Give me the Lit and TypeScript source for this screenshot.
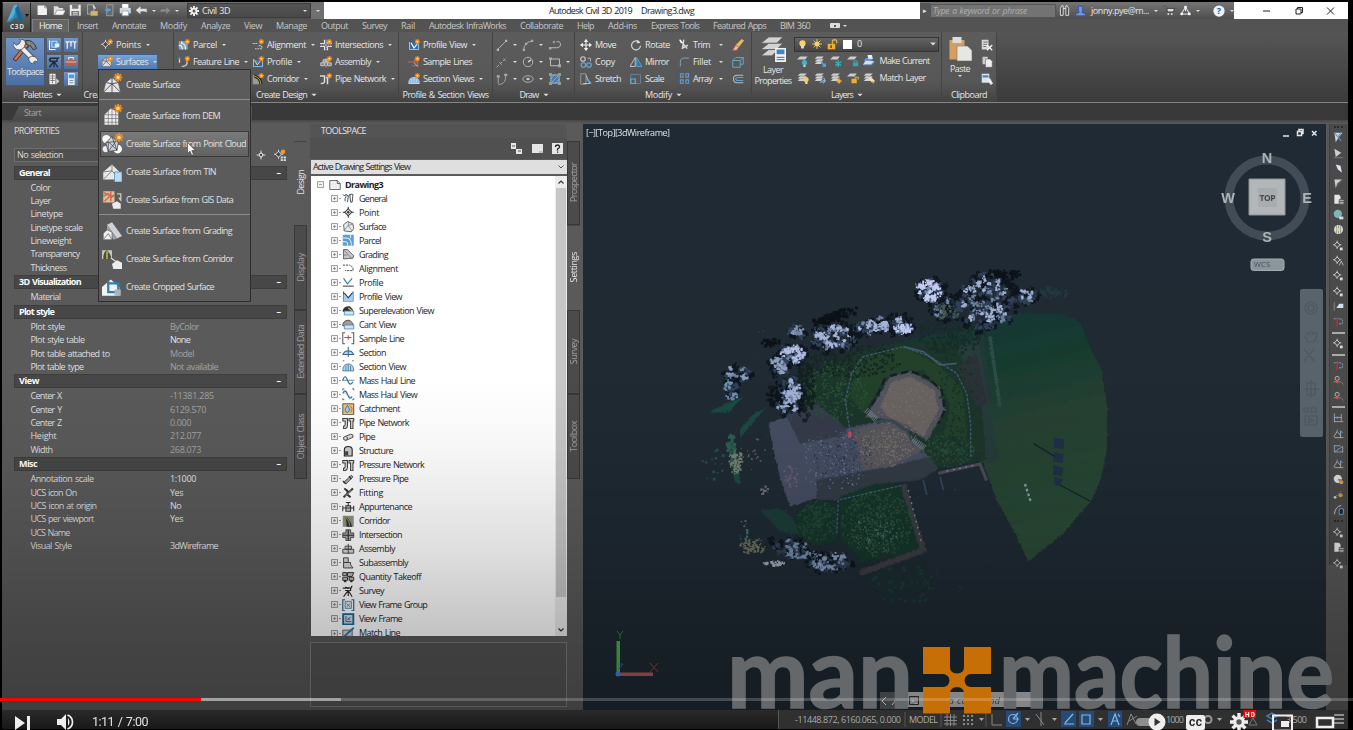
import { LitElement, html, css, svg } from "lit";
import { customElement, property } from "lit/decorators.js";
import { classMap } from "lit/directives/class-map.js";

/* ---------- icons (16 x 16 grid) ---------- */
const spark = svg`<path d="M12.500 0v7M9 3.500h7M10 1l5 5M15 1l-5 5" stroke="#f08a1c" stroke-width="1.500"/><circle cx="12.500" cy="3.500" r="1.300" fill="#ffe2a0"/>`;
const sheets = svg`<path d="M4 2h9l-3 3H1zM4 5.500h9l-3 3H1zM4 9h8l-3 3H1z" fill="#d2d2d2"/>`;
const node = svg`<path d="M8 1v14M1 8h14" stroke="#ddd" stroke-width="1.600"/><circle cx="8" cy="8" r="3" fill="#444" stroke="#eee" stroke-width="1.600"/>`;
const smallNode = svg`<path d="M6 1v12M0 7h12" stroke="#ddd" stroke-width="1.200"/><path d="M6 3l4 4-4 4-4-4z" fill="#4a4a4a" stroke="#eee" stroke-width="1.200"/>`;
const pipe = svg`<path d="M1 2h6v9q0 4-5 4v-3q2 0 2-2V5H1zM9 2h6v3h-1v10h-3V5H9z" fill="#ddd" stroke="#3c3c3c" stroke-width="1.300"/>`;

const ICONS: Record<string, any> = {
  new: svg`<path d="M2 2h9l3 3v9H2z" fill="#f1f1f1"/><path d="M11 2v3h3" fill="none" stroke="#888"/>`,
  open: svg`<path d="M1 3h5l2 2h5v3H5l-3 6H1z" fill="#ddd"/><path d="M5 8h11l-3 6H2z" fill="#f4f4f4" stroke="#777" stroke-width=".6"/>`,
  save: svg`<path d="M1 1h14v14H1z" fill="#e9e9e9"/><path d="M4 1h8v5H4zM3 9h10v6H3z" fill="#777"/><path d="M5 11h6M5 13h6" stroke="#eee"/>`,
  saveas: svg`<path d="M2 1h8v12H2z" fill="#666" stroke="#bbb"/><path d="M6 9h9v6H6z" fill="#d8b25c"/><path d="M9 2l3 4" stroke="#d9d9d9" fill="none" stroke-width="2"/>`,
  web: svg`<path d="M6 1h8v14H6z" fill="#686868" stroke="#aaa"/><path d="M8 4l-5 4 5 3V9h3V6H8z" fill="#4fa3d8"/>`,
  print: svg`<path d="M4 0h8v5H4z" fill="#fff"/><path d="M1 5h14v7H1z" fill="#d8d8d8"/><path d="M4 9h8v6H4z" fill="#fff" stroke="#7da6c8"/>`,
  undo: svg`<path d="M1 8l6-5v3h8v5q-2-2-8-1.500V13z" fill="#e0e0e0"/>`,
  redo: svg`<path d="M15 8L9 3v3H1v5q2-2 8-1.500V13z" fill="#8a8a8a"/>`,
  gear: svg`<path d="M8 0v16M0 8h16M2.300 2.300l11.400 11.400M13.700 2.300L2.300 13.700" stroke="#eee" stroke-width="3"/><circle cx="8" cy="8" r="5.200" fill="#eee"/><circle cx="8" cy="8" r="2.400" fill="#555"/>`,
  tools: svg`<path d="M8 1q5-1 7 5l-2 1-2-3-2 2z" fill="#7f858c" stroke="#333" stroke-width=".6"/><path d="M10 4L2 14l-2-1 8-10z" fill="#c9744a" stroke="#4a2b1c" stroke-width=".6"/><path d="M3.500 3.500l10 10" stroke="#444" stroke-width="3.600"/><path d="M3.500 3.500l10 10" stroke="#ececec" stroke-width="2.600"/><path d="M0 2l2 2 2-1 1-2-1-1q4 0 4 3-1 4-4 4-4 0-4-5zM12 11q4 0 4 4l-2-1-1 1 1 1q-4 0-4-4z" fill="#ececec" stroke="#444" stroke-width=".5"/>`,
  palette: svg`<path d="M2 2v12h8" stroke="#fff" fill="none" stroke-width="1.500"/><path d="M5 3h7v8H5z" fill="#4b9bd3" stroke="#e8f4ff"/><path d="M9 6h6v5H9z" fill="#e9eef4"/>`,
  pins: svg`<path d="M1 3l2 2 2-2M3 5v8M6 3l2 2 2-2M8 5v5M11 3l2 2 2-2M13 5v8" stroke="#f0f0f0" fill="none" stroke-width="1.600"/>`,
  survey: svg`<path d="M3 3h9v4H3zM1 5h2M12 4l3-2M8 7l-6 8M8 7v8M8 7l5 8" stroke="#1e2a38" fill="none" stroke-width="1.800"/>`,
  toolbox: svg`<path d="M5 5V2h6v3" fill="none" stroke="#eee" stroke-width="1.500"/><path d="M1 5h14v8H1z" fill="#b6604a"/><path d="M1 8h14" stroke="#f0dfd6"/>`,
  props: svg`<path d="M2 1h8v14H2z" fill="#eee"/><path d="M3 4h6M3 7h6M3 10h6M6 2v12" stroke="#666"/><path d="M11 7l4 4-4 4" fill="#ddd"/>`,
  prospect: svg`<path d="M4 0h9v16H4z" fill="#dceaf7"/><path d="M5 2h7v5H5z" fill="#4f9bd6"/><path d="M6 10h5M6 13h5" stroke="#777"/>`,
  points: svg`${smallNode}${spark}`,
  surface: svg`<path d="M2 6l5-4 6 4 1 8H1z" fill="#ddd" stroke="#555" stroke-width=".6"/><path d="M1 14l6-7 7 7M2 6l5 1 6-1M7 2v5" stroke="#555" fill="none"/>${spark}`,
  parcel: svg`<path d="M1 3h12v11H1z" fill="#88a2b8"/><path d="M1 9q4-2 5 5M5 3v3q5 0 5 8" stroke="#f4f4f4" fill="none" stroke-width="1.500"/>${spark}`,
  feature: svg`<path d="M2 3v6M5 14q8 0 7-7" stroke="#ddd" fill="none" stroke-width="1.600"/><path d="M2 2v3" stroke="#6aa6d8" stroke-width="2"/>${spark}`,
  alignment: svg`<path d="M1 6h7M9 9q5-1 4 4H4" stroke="#ccc" fill="none" stroke-width="1.500" stroke-dasharray="2.500 1"/>${spark}`,
  profile: svg`<path d="M2 4v10h12V7" stroke="#7fb7e6" fill="none" stroke-width="1.500"/><path d="M3 5l4 7 4-5" fill="#4884b8" stroke="#eee"/>${spark}`,
  corridor: svg`<path d="M1 3h9v12H1z" fill="#999"/><path d="M3 4q8 2 9 11" stroke="#222" stroke-width="4" fill="none"/><path d="M3 4q8 2 9 11" stroke="#e8d23c" fill="none"/>${spark}`,
  intersection: svg`<path d="M6 1v5H0M10 3v3h6M6 15v-5H0M10 15v-5h6" stroke="#ddd" fill="none" stroke-width="1.600"/><path d="M8 1v14M1 8h14" stroke="#ddd" stroke-dasharray="2 1"/>${spark}`,
  assembly: svg`<path d="M8 3v12M1 9h5v4H1zM10 9h5v4h-5zM4 5h7v3H4z" stroke="#ddd" fill="#888"/>${spark}`,
  pipenet: svg`<path d="M0 4h6v7q0 3-5 3M10 6v9" stroke="#ddd" fill="none" stroke-width="2"/><path d="M8 6h5" stroke="#ddd" stroke-width="2"/>${spark}`,
  profview: svg`<path d="M2 4v10h12V6" stroke="#bcd9f4" fill="#2f6ea9"/><path d="M4 5l4 7 4-5" stroke="#fff" fill="none" stroke-width="1.500"/>${spark}`,
  sampleline: svg`<path d="M0 8h8M9 4v4h4v5H6" stroke="#c96b56" fill="none" stroke-width="1.500"/><path d="M8 9l5 5" stroke="#ddd"/>${spark}`,
  secview: svg`<path d="M1 14q0-8 7-8t7 8z" fill="#82b1dc" stroke="#e2efff"/><path d="M5 13V8M8 13V7M11 13V8" stroke="#d7ebff"/>${spark}`,
  line: svg`<path d="M2 14L13 3" stroke="#ccc"/><path d="M1 13h3v3H1zM12 1h3v3h-3z" fill="#b5b5b5"/>`,
  rayline: svg`<path d="M1 15L14 2" stroke="#ccc" stroke-dasharray="4 2"/><path d="M4 8l4 4M10 3l3 4" stroke="#aaa"/>`,
  pline: svg`<path d="M3 15h3q7-1 7-12M3 14V5" stroke="#bbb" fill="none"/><path d="M1 3h4v3H1zM11 1h4v3h-4z" fill="#aaa"/>`,
  arc: svg`<path d="M2 15Q3 4 13 3" stroke="#ccc" fill="none"/><path d="M12 1h3v3h-3zM1 13h3v3H1zM4 5h3v3H4z" fill="#aaa"/>`,
  circle: svg`<circle cx="8" cy="8" r="6.300" stroke="#ccc" fill="none"/><path d="M8 8l4-3" stroke="#eee" stroke-width="1.500"/>`,
  ellipse: svg`<ellipse cx="8" cy="8" rx="7" ry="4.300" stroke="#ccc" fill="none"/><path d="M6 8h4" stroke="#eee" stroke-width="2"/>`,
  spline: svg`<path d="M1 12h9q5-1 4-5t-5-2" stroke="#ccc" fill="none"/><path d="M7 3l-3 2 3 2M0 11h3v3H0z" fill="#aaa"/>`,
  rect: svg`<path d="M2 4h12v9H2z" stroke="#ddd" fill="none"/><path d="M0 2h4v3H0zM12 11h4v4h-4z" fill="#aaa"/>`,
  hatch: svg`<path d="M2.500 2.500h11v11h-11z" fill="#4c78a8" stroke="#bcd"/><path d="M2 8l6-6M2 14L14 2M8 14l6-6" stroke="#91bfea"/><path d="M0 0h4v4H0zM12 0h4v4h-4zM0 12h4v4H0zM12 12h4v4h-4z" fill="#999"/>`,
  move: svg`<path d="M8 1v14M1 8h14" stroke="#eee" stroke-width="1.500"/><path d="M8 0l3 4H5zM8 16l3-4H5zM0 8l4-3v6zM16 8l-4-3v6z" fill="#eee"/>`,
  rotate: svg`<path d="M12 4a6 6 0 1 0 2 5" stroke="#ddd" fill="none" stroke-width="1.500"/><path d="M10 1l4 4-5 1z" fill="#ddd"/>`,
  trim: svg`<path d="M2 2l10 12M7 1L5 14M13 9l-9 5" stroke="#ddd" stroke-width="2"/><path d="M1 1l3 5" stroke="#fff" stroke-width="2"/>`,
  copy: svg`<circle cx="4" cy="4" r="3" stroke="#ccc" fill="none" stroke-width="1.500"/><circle cx="4.500" cy="12" r="3" stroke="#5eb0e6" fill="none" stroke-width="1.500"/><circle cx="12" cy="12" r="3" stroke="#5eb0e6" fill="none" stroke-width="1.500"/><path d="M10 3h4v4" stroke="#ccc" fill="none"/>`,
  mirror: svg`<path d="M7 2v12H0z" fill="none" stroke="#ddd"/><path d="M9 2v12h7z" fill="#2d77ad" stroke="#5eb0e6"/>`,
  fillet: svg`<path d="M2 15V9q0-6 6-6h7" stroke="#7ab" fill="none" stroke-width="1.400"/>`,
  stretch: svg`<path d="M1 1h7v14H1z" fill="none" stroke="#aaa"/><path d="M8 3l5 11H4" fill="none" stroke="#ddd"/><path d="M9 8l6 6" stroke="#5eb0e6" stroke-width="1.500"/>`,
  scale: svg`<path d="M1 2h13v12H1z" fill="none" stroke="#6a8ea8"/><path d="M1 8h6v6H1z" fill="none" stroke="#5eb0e6" stroke-width="1.600"/>`,
  array: svg`<path d="M2 1h4v5H2zM10 1h4v5h-4zM2 10h4v5H2zM10 10h4v5h-4z" fill="none" stroke="#5e9fd6" stroke-width="1.500"/>`,
  erase: svg`<path d="M5 8l8-8 3 2-7 9z" fill="#e5bd53"/><path d="M1 15l4-7 4 3-3 4z" fill="#f0b7a5" stroke="#c55"/>`,
  explode: svg`<path d="M1 6h10v9H1zM5 2h10v9h-4M1 6l4-4M11 6l4-4" fill="none" stroke="#6aa6c8" stroke-width="1.300"/>`,
  offset: svg`<path d="M15 3H7q-5 0-5 5t5 5h8" fill="none" stroke="#bbb" stroke-width="1.400"/><path d="M15 6H8q-3 0-3 2t3 2h7" fill="none" stroke="#5e9fd6" stroke-width="1.400"/>`,
  layerprops: svg`<path d="M5 0h9l-4 4H0zM5 4h9l-4 4H0zM5 8h6l-4 4H0z" fill="#d2d2d2" stroke="#555" stroke-width=".4"/><path d="M9 7h7v9H9z" fill="#eef3f8"/><path d="M10 8h5v3h-5z" fill="#3d86c6"/><path d="M10 13h5M10 14.500h5" stroke="#555" stroke-width=".6"/>`,
  bulb: svg`<circle cx="8" cy="6" r="5.500" fill="#f7d36a"/><path d="M5.500 10h5v5h-5z" fill="#ddd"/>`,
  sun: svg`<path d="M8 0v16M0 8h16M2.500 2.500l11 11M13.500 2.500l-11 11" stroke="#f3c04f" stroke-width="1.500"/><circle cx="8" cy="8" r="4" fill="#f8d06a"/>`,
  lock: svg`<path d="M8 7V3q0-2 3-2t3 2v3" stroke="#e0b04a" fill="none" stroke-width="2"/><path d="M1 7h11v8H1z" fill="#efae38"/><path d="M6 9v4" stroke="#5a3a00" stroke-width="2"/>`,
  white: svg`<path d="M0 0h16v16H0z" fill="#fff"/>`,
  lay1: svg`<path d="M4 2h10l-3 4H0z" fill="#ccc"/><circle cx="10" cy="10" r="3.500" fill="#38b6c9"/><path d="M8.500 13h3v3h-3z" fill="#ccc"/>`,
  lay2: svg`${sheets}<path d="M9 9l6 6M15 11v4h-4" stroke="#5eb0e6" fill="none" stroke-width="1.500"/>`,
  lay3: svg`<path d="M4 2h9l-3 4H0z" fill="#ccc"/><path d="M11 7v9M7 9l8 5M15 9l-8 5" stroke="#31b5bd" stroke-width="1.800"/>`,
  lay4: svg`<path d="M4 2h9l-3 4H0z" fill="#ccc"/><path d="M8 10h7v5H8z" fill="#31a9b3"/><path d="M9.500 10V8h4v2" stroke="#31a9b3" fill="none" stroke-width="1.400"/>`,
  lay5: svg`<path d="M3 8h12l-4 5H0z" fill="#ddd"/><path d="M4 4h10l-3 4H1z" fill="#5f9bd2"/><path d="M6 0h6l1 5H7z" fill="#eee"/><path d="M2 13h9l4-4" stroke="#5f9bd2" fill="none" stroke-width="1.500"/>`,
  lay6: svg`${sheets}<circle cx="12" cy="10" r="3.500" fill="#f4cc63"/><path d="M11 13h3v3h-3z" fill="#ddd"/>`,
  lay7: svg`${sheets}<path d="M8 14l6-3M13 8l2 4-3 3" stroke="#89b7dd" fill="none" stroke-width="1.500"/>`,
  lay8: svg`${sheets}<circle cx="12" cy="12" r="2.500" fill="#f3b43c"/><path d="M12 7v9M8 12h8" stroke="#f3b43c"/>`,
  lay9: svg`<path d="M4 2h9l-3 4H0z" fill="#ccc"/><path d="M6 9h7v6H6z" fill="#efae38"/><path d="M11 9V7h4v3" stroke="#efae38" fill="none" stroke-width="1.400"/>`,
  lay10: svg`${sheets}<path d="M7 9l4-2 5 5-3 3z" fill="#f0e2bd"/><path d="M12 13l3 2" stroke="#c4884a" stroke-width="2"/>`,
  paste: svg`<path d="M1 2h10v13H1z" fill="#d3a15d"/><path d="M3 0h6v4H3z" fill="#ddd"/><path d="M6 6h7l3 3v7H6z" fill="#e6e6e2" stroke="#777" stroke-width=".4"/>`,
  cut: svg`<path d="M1 1h9v13H1z" fill="#d8d8d8"/><path d="M3 4h6M3 7h5M3 10h4" stroke="#555"/><path d="M8 8l7 7M15 8l-7 7" stroke="#fff" stroke-width="1.500"/>`,
  copy2: svg`<path d="M2 1h7v10H2z" fill="#ccc"/><path d="M6 4h6l3 3v8H6z" fill="#eee" stroke="#555" stroke-width=".7"/>`,
  paste2: svg`<path d="M1 1h10v12H1z" fill="#dbe6ee"/><path d="M2 3h8v3H2z" fill="#4b86bd"/><path d="M8 9l4-2 4 7-3 2z" fill="#eee"/>`,
  mSurface: svg`<path d="M3 6l5-4 5 4 2 8-14 0z" fill="#e3e5e7" stroke="#555" stroke-width=".5"/><path d="M1 14l7-7 7 7M3 6l5 1 5-1M8 2v12" stroke="#42464a" fill="none" stroke-width=".7"/>`,
  mDem: svg`<path d="M2 7l5-5 6 3v10l-11 0z" fill="#eceded"/><path d="M5 3.500V15M8 2v13M11 4v11M2 7h11M2 10h11M2 13h11" stroke="#777" stroke-width=".6"/>`,
  mCloud: svg`<circle cx="3.500" cy="4" r="3.300" fill="#f8f8f8"/><circle cx="3" cy="12" r="2.500" fill="#eee"/><circle cx="12.500" cy="12" r="3.500" fill="#fff"/><path d="M3 7l5-5 5 5-1 6-7 1z" fill="#c8d1db" stroke="#444" stroke-width=".6"/><path d="M3 7l8-1-6 8M8 2l4 11M5 14V6l7 7" stroke="#444" fill="none" stroke-width=".6"/>`,
  mTin: svg`<path d="M1 8l7-6 6 6v6H1z" fill="#e7e7e7"/><path d="M1 14l7-7 6 7M1 8l7-1V2" stroke="#777" fill="none" stroke-width=".7"/><path d="M10 8h6v8h-6z" fill="#b9dcf4" stroke="#5d93b8" stroke-width=".7"/>`,
  mGis: svg`<path d="M1 1h9v9H1z" fill="#d9c3a0"/><path d="M1 5l4-2 2 3 3-2" stroke="#5da15f" stroke-width="1.300" fill="none"/><path d="M2 9l4-4M7 1v8M1 2l8 3" stroke="#dd6752" stroke-width="1.300"/><path d="M12 3h3v5l-1.500-2M15 8l-1-1" stroke="#ccc" fill="none"/><path d="M8 11l4-2 3 2v4H9z" fill="#ececec"/>`,
  mGrade: svg`<path d="M4 3l4-2 8 11-4 2z" fill="#cfd2d5"/><path d="M4 3l8 11-3 1-5-8z" fill="#9da1a5"/><path d="M1 10l3-3 4 2v6H1z" fill="#f1f1f1" stroke="#555" stroke-width=".5"/><path d="M1 15l4-5 3 5" stroke="#777" fill="none" stroke-width=".7"/>`,
  mCorr: svg`<path d="M0 1h8v7H0z" fill="#c5c5c1"/><path d="M1 8q0-6 3-7 3 3 4 7z" fill="#4c4c45"/><path d="M4 8V2" stroke="#e5d33b"/><path d="M7 7l4 3" stroke="#ddd"/><path d="M8 12l4-3 4 2v5H9z" fill="#ececec"/>`,
  mCrop: svg`<path d="M0 8l7-6 7 6v7H0z" fill="#f1f5f8"/><path d="M5 3v9h10M4 5h9v10" stroke="#2e7fb5" fill="none" stroke-width="1.800"/><path d="M10 10h5v5h-5z" fill="#aab4bd"/>`,
  doc: svg`<path d="M1 2h10l4 4v8H1z" fill="#eee" stroke="#444"/><path d="M11 2v4h4" fill="none" stroke="#444"/>`,
  General: svg`<path d="M1 3l2 2 2-2v3L4 8v4M6 3l2 3 2-3M8 6l-1 7M10 3h4l-1 10h-2z" stroke="#3e4a55" fill="none" stroke-width="1.200"/>`,
  Point: svg`<path d="M8 1v14M1 8h14" stroke="#333" stroke-width="1.300"/><path d="M8 3.500l4.500 4.500L8 12.500 3.500 8z" fill="#ddd" stroke="#333" stroke-width="1.300"/><circle cx="8" cy="8" r="1.500" fill="#333"/>`,
  Surface: svg`<path d="M2 6l5-4 7 3 1 6-3 4-9-1z" fill="#e9edf0" stroke="#444"/><path d="M2 14l6-7 5 7M8 2v5M8 7l6-2" stroke="#777" fill="none"/>`,
  Parcel: svg`<path d="M1 1h14v14H1z" fill="#5b9ed0"/><path d="M1 5h5q6 0 6 10M1 10h3q4 0 3 5M11 1v4" stroke="#e6f3fd" fill="none" stroke-width="1.300"/>`,
  Grading: svg`<path d="M2 2l5 0 8 8-1 3-12 1z" fill="#c7c9cb" stroke="#444"/><path d="M3 3l9 10M2 9h5" stroke="#777"/>`,
  Alignment: svg`<path d="M1 4h9M11 5q4 1 3 6H4" stroke="#444" fill="none" stroke-width="1.200" stroke-dasharray="3 1"/>`,
  Profile: svg`<path d="M2 3l5 7 6-7" stroke="#3878a8" fill="none" stroke-width="1.500"/><path d="M1 13h14" stroke="#555" stroke-width="1.500"/>`,
  "Profile View": svg`<path d="M2 2v12h12V2" stroke="#2a5f8c" fill="none" stroke-width="1.500"/><path d="M2 5l6 5 6-6v10H2z" fill="#a6cdea"/><path d="M3 4l5 6 5-6" stroke="#225" fill="none" stroke-width="1.300"/>`,
  "Superelevation View": svg`<path d="M1 8q2-6 9-5l4 4v3H1z" fill="#333"/><path d="M8 5l5 4" stroke="#e7d542" stroke-width="1.500"/><path d="M3 9h12v5H3z" fill="#cfe5f5" stroke="#3d86b8"/>`,
  "Cant View": svg`<path d="M1 8q2-6 9-5l4 4v3H1z" fill="#a89a92" stroke="#333"/><path d="M3 9h12v5H3z" fill="#cfe5f5" stroke="#3d86b8"/>`,
  "Sample Line": svg`<path d="M4 1H1v14h3M12 1h3v14h-3" stroke="#555" fill="none" stroke-width="1.300"/><path d="M3 7h9M8 4v6" stroke="#b6483c" stroke-width="1.300"/>`,
  Section: svg`<path d="M8 1v13M1 11q2-5 7-5t7 5z" stroke="#35638c" fill="#b9d5ea" stroke-width="1.300"/>`,
  "Section View": svg`<path d="M1 14q0-9 7-9t7 9z" fill="#bcd7ea" stroke="#397299"/><path d="M5 14V7M8 14V5M11 14V7" stroke="#397299"/><path d="M1 1h2M13 1h2" stroke="#444"/>`,
  "Mass Haul Line": svg`<path d="M0 8h16" stroke="#567"/><path d="M1 8q3-9 6 0t7 2" stroke="#2a6fa7" fill="none" stroke-width="1.500"/>`,
  "Mass Haul View": svg`<path d="M1 3V1h2M13 1h2v2M1 13v2h2M15 13v2h-2" stroke="#444" fill="none"/><path d="M1 7q3-7 6 1t6 3" stroke="#2a6fa7" fill="#cfe3f2" stroke-width="1.500"/>`,
  Catchment: svg`<path d="M1 1h14v14H1z" fill="#edc37e" stroke="#333"/><path d="M7 3q5 7 0 9-6-1 0-9z" fill="#9fd2ee" stroke="#24608e"/><path d="M10 3q5 4 1 9" stroke="#c94a34" fill="none"/>`,
  "Pipe Network": pipe, "Pressure Network": pipe,
  Pipe: svg`<path d="M2 8l9-4q4 0 3 4l-9 4q-4 0-3-4zM6 7q2 2 0 4" fill="#ddd" stroke="#444" stroke-width="1.200"/>`,
  Structure: svg`<path d="M3 6q0-4 5-4t5 4v8H3z" fill="#ccc" stroke="#222" stroke-width="1.400"/><path d="M4 8h4v5H4z" fill="#444"/>`,
  "Pressure Pipe": svg`<path d="M2 12l10-9 2 2-9 9z" fill="#aaa" stroke="#333"/><path d="M1 10l4 4M9 4l3 4" stroke="#333" stroke-width="1.500"/>`,
  Fitting: svg`<path d="M2 13L14 2M3 2l4 3 0 5 4 3" stroke="#333" fill="none" stroke-width="2.500"/><path d="M4 12l8-8" stroke="#ccc"/>`,
  Appurtenance: svg`<path d="M1 6v7M15 6v7M1 9h14M5 2h6M8 2v4M5 6h6v7H5z" stroke="#333" fill="#ccc" stroke-width="1.300"/>`,
  Corridor: svg`<path d="M1 1h14v14H1z" fill="#8b9489"/><path d="M3 1q8 5 10 14H6Q6 5 3 1z" fill="#2d2d2b"/><path d="M4 2q6 6 6 12" stroke="#e0cd3c" fill="none"/>`,
  Intersection: svg`<path d="M5 1v4H1v6h4v4h6v-4h4V5h-4V1z" fill="#aaa" stroke="#333"/><path d="M8 1v14M1 8h14" stroke="#333" stroke-width="1.500"/>`,
  Assembly: svg`<path d="M8 1v13M1 8h14v5H1zM4 4h8v4H4z" stroke="#444" fill="#d6d6d6" stroke-width="1.200"/>`,
  Subassembly: svg`<path d="M2 1h6v6H2zM2 7h9v3l3 4H2z" stroke="#444" fill="#d6d6d6" stroke-width="1.200"/>`,
  "Quantity Takeoff": svg`<path d="M1 2h5v4H1zM7 2h8l-2 5H7zM1 8h6v4H1zM9 8h6v4H9z" fill="#bbb" stroke="#333" stroke-width="1.200"/><circle cx="4" cy="13" r="1.500" fill="#333"/><circle cx="12" cy="13" r="1.500" fill="#333"/>`,
  Survey: svg`<path d="M1 4h10v3H4M13 1l-2 4M8 7l-6 8M8 7v7M8 7l5 8M4 3l8 1" stroke="#333" fill="none" stroke-width="1.500"/>`,
  "View Frame Group": svg`<path d="M4 1H1v14h3M12 1h3v14h-3" stroke="#2b6390" fill="none" stroke-width="1.500"/><path d="M4 3h8v9H4z" fill="#dce9f2" stroke="#3a7aaa"/><path d="M6 6l4 4M10 6l-4 4" stroke="#678"/>`,
  "View Frame": svg`<path d="M1.500 1.500h13v13h-13z" fill="#cfe3f0" stroke="#206698" stroke-width="2.400"/><path d="M5 4v7h7M7 9l4-4M7 6l3 3" stroke="#245" fill="none"/>`,
  "Match Line": svg`<path d="M1 4h12v8H1z" fill="#ccd6dd" stroke="#444"/><path d="M15 1L3 12" stroke="#2b78b4" stroke-width="2.500"/>`,
  node,
  flag: svg`<path d="M2 1h12L8 8l-4 7z" fill="#d4d8dc"/><path d="M2 1l10 12M12 1l-5 6" stroke="#5b93c9" stroke-width="1.500"/>`,
  flag2: svg`<path d="M2 1l10 6-8 6z" fill="#cfcfcf"/><path d="M2 14h13" stroke="#aaa" stroke-dasharray="2 1"/>`,
  flag3: svg`<path d="M4 2l7 2 2 10-6-5z" fill="#dce4ee"/>`,
  flag4: svg`<path d="M2 2h11L6 8l-2 7z" fill="#cfcfcf"/><path d="M13 2L5 13" stroke="#777"/>`,
  page: svg`<path d="M2 1h7l2 3v10H2z" fill="#e5e5e5"/><path d="M9 8h7v7H9z" fill="#aaa" stroke="#444"/><path d="M9 11h7" stroke="#444"/>`,
  globe: svg`<circle cx="7" cy="7" r="6" fill="#7ab6d8"/><path d="M3 4q3 2 2 6M7 2q5 4 2 8" stroke="#80bb72" stroke-width="2" fill="none"/><path d="M9 11h6v4H9z" fill="#ddd"/>`,
  globe2: svg`<circle cx="8" cy="8" r="6.500" fill="#ddd"/><path d="M5 3v10M8 2v12M11 3v10" stroke="#777"/><circle cx="7" cy="8" r="2" fill="#e2df58"/>`,
  nodeS: svg`${smallNode}<path d="M10 11h4v4h-4z" fill="#ddd"/>`,
  nodeP: svg`${smallNode}<path d="M9 10h7v6H9z" fill="#ddd"/><path d="M9 13h7M12.500 10v6" stroke="#555"/><circle cx="12" cy="3.500" r="3" fill="#f09a28"/>`,
  nodeA: svg`${smallNode}<path d="M9 15l3-6 3 6" stroke="#ddd" fill="none"/>`,
  sel: svg`<path d="M2 2v12" stroke="#777" stroke-width="2"/><path d="M5 10l4-6h6v6z" fill="#cfe1f2"/>`,
  red: svg`<path d="M1 4h9q5 1 4 5t-5 2" fill="none" stroke="#7a98bb" stroke-width="1.500" stroke-dasharray="3 1"/><path d="M6 1v14" stroke="#e22" stroke-width="1.600"/>`,
  redDot: svg`<path d="M1 10h9q4 1 5 5" fill="none" stroke="#8ba" stroke-dasharray="3 1"/><circle cx="6" cy="5" r="3" fill="none" stroke="#ddd"/><circle cx="6" cy="10" r="2" fill="#e44"/>`,
  dim: svg`<path d="M2 2v13M2 8h10M12 3v10M2 14h13" stroke="#b9cbe0" fill="none"/><path d="M6 6v4" stroke="#5b97d6" stroke-width="1.500"/>`,
  dim2: svg`<path d="M1 13l5-8 4 5M11 4v10M2 14h13" stroke="#cbd5df" fill="none"/><path d="M6 2v3M11 4l3 3" stroke="#5b97d6" stroke-width="1.500"/>`,
  dim3: svg`<path d="M2 3v10h13M2 13L14 5v8M2 4h9" stroke="#9fc0de" fill="none"/>`,
  ball: svg`<circle cx="7" cy="7" r="6" fill="#dcdcdc"/><path d="M7 7l6 1-3 5z" fill="#777"/><circle cx="12" cy="12" r="3" fill="#e49a3d"/>`,
  dotnode: svg`<path d="M2 13L13 2" stroke="#aaa" stroke-dasharray="2 2"/><circle cx="3" cy="12" r="2" fill="#ccc"/><circle cx="11" cy="9" r="3" fill="#e0913a"/>`,
  curve: svg`<path d="M2 15Q3 4 12 2" stroke="#ccc" fill="none" stroke-width="1.300"/><path d="M9 7h6v8H9z" fill="#222" stroke="#6ba3dc" stroke-width="1.400"/>`,
};
const ic = (name: string, s = 12) =>
  html`<svg class="ic" width=${s} height=${s} viewBox="0 0 16 16" fill="none">${ICONS[name]}</svg>`;

/* text whose tracking is computed so that it spans w pixels */
const T = (text: string, w: number) => html`<fit-text .w=${w} .text=${text}></fit-text>`;
const car = html`<i class="car"></i>`;
const shared = css`
  * { box-sizing: border-box; }
  .ic { flex: none; display: block; }
  .row { display: flex; align-items: center; }
  .car { display: inline-block; width: 0; height: 0; border: 2.200px solid transparent; border-top: 2.800px solid #ddd; border-bottom: 0; flex: none; }
`;

@customElement("fit-text")
class FitText extends LitElement {
  @property({ type: Number }) w = 0;
  @property() text = "";
  static styles = css`:host { display: inline-block; white-space: pre; flex: none; } span { display: inline-block; word-spacing: .9px; }`;
  render() { return html`<span>${this.text}</span>`; }
  updated() {
    const s = this.renderRoot.querySelector("span") as HTMLElement;
    s.style.letterSpacing = "0";
    const vertical = getComputedStyle(s).writingMode !== "horizontal-tb";
    const now = vertical ? s.offsetHeight : parseFloat(getComputedStyle(s).width);
    s.style.letterSpacing = (this.w - now) / this.text.length + "px";
  }
}

/* ---------- title bar and tab row ---------- */
@customElement("title-bar")
class TitleBar extends LitElement {
  static styles = [shared, css`
    :host { display: grid; grid-template-columns: 29px 1fr; height: 30px; color: #e6e6e6; font-size: 9px; }
    .logo { background: linear-gradient(#747474, #3f3f3f); border: 1px solid #222; border-top-color: #888; }
    .bar { height: 17px; background: linear-gradient(#747474, #4e4e4e); }
    .qa { width: 156px; padding-left: 5px; gap: 4px; }
    .ws { width: 124px; height: 15px; gap: 3px; padding: 0 3px 0 1px; background: linear-gradient(#555, #484848); border: 1px solid #3c3c3c; }
    .more { width: 13px; height: 17px; justify-content: center; background: #707070; }
    .ttl { width: 596px; height: 17px; background: #fff; color: #222; padding-left: 225px; gap: 9px; }
    .chev { width: 10px; height: 16px; justify-content: center; background: #555; font-size: 7px; }
    .search { width: 126px; height: 14px; padding-left: 2px; background: #737373; border: 1px solid #555; color: #b0b0b0; font-style: italic; font-size: 8.500px; }
    .acct { width: 178px; padding-left: 3px; gap: 5px; }
    .win { width: 114px; height: 17px; background: #fff; padding-left: 29px; gap: 22px; }
    .tabs { height: 13px; background: #535353; color: #c6c6c6; padding-left: 1px; gap: 14px; }
    .on { height: 13px; width: 37px; justify-content: center; margin-right: -6px; background: #646464; border: 1px solid #808080; border-bottom: 0; color: #f0f0f0; }
    .pill { width: 10px; height: 5px; border-radius: 1px; background: #ddd; margin-left: 6px; display: grid; place-items: center; }
    .pill::after { content: ""; width: 2px; height: 2px; background: #555; }
    .sm { display: flex; margin-left: -11px; }
    .help { margin-left: 8px; }
  `];
  render() {
    const tabs: [string, number][] = [["Insert", 21], ["Annotate", 34], ["Modify", 27], ["Analyze", 29], ["View", 18], ["Manage", 31], ["Output", 27], ["Survey", 25], ["Rail", 14], ["Autodesk InfraWorks", 77], ["Collaborate", 43], ["Help", 17], ["Add-ins", 29], ["Express Tools", 48], ["Featured Apps", 53], ["BIM 360", 30]];
    return html`
      <div class="logo"><svg width="27" height="28" viewBox="0 0 27 28">
        <path d="M4 19L11 2h4l6 17h-5l-2-5q-4 2-6 5z" fill="#2d86b5"/><path d="M11 2h4l-5 12-6 5z" fill="#51b1da"/><path d="M15 2l6 17h-5L12 6z" fill="#1b6593"/>
        <path d="M22 11h4l-2 3z" fill="#111"/><text x="7" y="26" font-size="6.500" font-weight="bold" fill="#ddd" font-family="Open Sans" textLength="14">C3D</text></svg></div>
      <div>
        <div class="bar row">
          <div class="qa row">${["new", "open", "save", "saveas", "web", "print", "undo"].map((n) => ic(n, 12.500))}${car}${ic("redo", 11)}${car}</div>
          <div class="ws row">${ic("gear", 10)}${T("Civil 3D", 28)}<span style="flex:1"></span>${car}</div>
          <div class="more row">${car}</div>
          <div class="ttl row">${T("Autodesk Civil 3D 2019", 83)}${T("Drawing3.dwg", 53)}</div>
          <div class="chev row">▸</div>
          <div class="search row">${T("Type a keyword or phrase", 94)}</div>
          <div class="acct row">
            <svg width="11" height="11" viewBox="0 0 16 16"><path d="M2 15V5l2-4h2v14zM14 15V5l-2-4h-2v14zM6 5h4" fill="#444" stroke="#eee" stroke-width="1.300"/></svg>
            <svg width="11" height="12" viewBox="0 0 16 16"><path d="M5 1h6v6l-1 3 5 2v3H1v-3l5-2-1-3z" fill="#6f95ea" stroke="#274a9c"/></svg>
            ${T("jonny.pye@m...", 58)}${car}
            <svg width="12" height="11" viewBox="0 0 16 16"><path d="M0 3h4l2 7h8l2-5H5" fill="#ddd" stroke="#222"/><circle cx="7" cy="13" r="1.500" fill="#ddd"/><circle cx="12" cy="13" r="1.500" fill="#ddd"/></svg>
            <svg width="11" height="11" viewBox="0 0 16 16"><path d="M8 3l6 10H2zM8 9v-6" stroke="#dbe6f2" stroke-width="1.500" fill="none"/><circle cx="8" cy="3" r="2" fill="#fff"/><circle cx="2.500" cy="13" r="2" fill="#fff"/><circle cx="13.500" cy="13" r="2" fill="#fff"/></svg>${car}
            <svg class="help" width="12" height="12" viewBox="0 0 16 16"><circle cx="8" cy="8" r="7.500" fill="#eef3fb"/><text x="5" y="12" font-size="12" font-weight="bold" fill="#2456b5">?</text></svg>${car}
          </div>
          <div class="win row">
            <svg width="80" height="12"><path d="M0 6h7M33 4h5v5h-5zM34.500 4V2.500h5v5H38M64 2.500l7 7M71 2.500l-7 7" stroke="#222" fill="none"/></svg>
          </div>
        </div>
        <div class="tabs row"><div class="on row">${T("Home", 23)}</div>${tabs.map(([t, w]) => T(t, w))}<span class="pill"></span><span class="sm">${car}</span></div>
      </div>`;
  }
}

/* ---------- ribbon ---------- */
@customElement("ribbon-bar")
class RibbonBar extends LitElement {
  static styles = [shared, css`
    :host { display: flex; height: 71px; background: linear-gradient(#565656, #484848 50%, #3b3b3b); border-bottom: 1px solid #858585; color: #e6e6e6; font-size: 9px; }
    .panel { display: flex; flex-direction: column; flex: none; background: linear-gradient(#5c5c5c, #575757 70%, #454545); border-right: 1px solid #444; }
    .body { display: flex; height: 55px; padding-top: 4.500px; }
    .name { height: 15px; justify-content: center; gap: 5px; white-space: nowrap; overflow: hidden; background: linear-gradient(#535353, #414141); }
    .col { display: flex; flex-direction: column; flex: none; }
    .it { height: 17px; gap: 3px; }
    .it > :nth-child(3) { margin-left: 1.500px; }
    .hot { background: linear-gradient(#7aa3d6, #4d7ab0); height: 14px; margin: 1.500px 0 1.500px -3px; padding-left: 3px; width: 59px; outline: 1px solid #3c5f8d; }
    .big { width: 40px; height: 49px; display: flex; flex-direction: column; align-items: center; padding-top: 1px; gap: 2px; background: linear-gradient(#7195c6, #4a6fa3); border: 1px solid #3e5a82; }
    .g { display: grid; }
    .pal { grid-template-columns: 17px 17px; grid-auto-rows: 17px; padding-left: 1px; }
    .pal span { display: grid; place-items: center; width: 14px; height: 14px; margin: 1px; background: linear-gradient(#7195c6, #4a6fa3); }
    .pal .off { background: none; }
    .lp { display: flex; flex-direction: column; align-items: center; gap: 1px; }
    .lp fit-text { line-height: 10px; }
    .combo { width: 145px; height: 15px; gap: 5px; padding: 0 3px; background: linear-gradient(#646464, #444); border: 1px solid #353535; }
    .licons { gap: 4.500px; height: 17px; padding-left: 3px; }
  `];
  item(i: string, t: string, w: number, c = false, hot = false) {
    return html`<div class=${classMap({ it: true, row: true, hot })}>${ic(i)}${T(t, w)}${c ? car : ""}</div>`;
  }
  panel(w: number, label: any, body: any, arrow = true) {
    return html`<section class="panel" style="width:${w}px"><div class="body">${body}</div><div class="name row">${label}${arrow ? html`<i class="car" style="transform:scale(1.300)"></i>` : ""}</div></section>`;
  }
  col(ml: number, w: number, b: any) { return html`<div class="col" style="margin-left:${ml}px;width:${w}px">${b}</div>`; }
  render() {
    const d = (n: string) => html`<div class="it row" style="gap:5px">${ic(n, 12)}${car}</div>`;
    return html`
      ${this.panel(81, T("Palettes", 29), html`
        <div class="big" style="margin-left:3px">${ic("tools", 25)}${T("Toolspace", 36)}</div>
        <div class="g pal">${["palette", "pins", "survey", "toolbox"].map((n) => html`<span>${ic(n)}</span>`)}<span class="off">${ic("props")}</span><span>${ic("prospect")}</span></div>`)}
      ${this.panel(91, T("Create Ground Data", 80), this.col(18, 70, [this.item("points", "Points", 25, true), this.item("surface", "Surfaces", 32, true, true)]))}
      ${this.panel(225, T("Create Design", 51), html`
        ${this.col(4, 75, [this.item("parcel", "Parcel", 24, true), this.item("feature", "Feature Line", 46, true)])}
        ${this.col(-1, 68, [this.item("alignment", "Alignment", 39, true), this.item("profile", "Profile", 25, true), this.item("corridor", "Corridor", 32, true)])}
        ${this.col(0, 76, [this.item("intersection", "Intersections", 48, true), this.item("assembly", "Assembly", 36, true), this.item("pipenet", "Pipe Network", 51, true)])}`)}
      ${this.panel(94, T("Profile & Section Views", 86), this.col(9, 80, [this.item("profview", "Profile View", 44, true), this.item("sampleline", "Sample Lines", 49), this.item("secview", "Section Views", 51, true)]), false)}
      ${this.panel(82, T("Draw", 19), html`
        ${this.col(3, 26, ["line", "rayline", "pline"].map(d))}${this.col(0, 27, ["arc", "circle", "ellipse"].map(d))}
        ${this.col(0, 26, html`<div class="it row">${ic("spline", 13)}</div>${["rect", "hatch"].map(d)}`)}`)}
      ${this.panel(177, T("Modify", 27), html`
        ${this.col(5, 50, [this.item("move", "Move", 21), this.item("copy", "Copy", 20), this.item("stretch", "Stretch", 26)])}
        ${this.col(0, 50, [this.item("rotate", "Rotate", 25), this.item("mirror", "Mirror", 24), this.item("scale", "Scale", 19)])}
        ${this.col(-1, 52, html`<div class="it row">${ic("trim", 11)}${T("Trim", 17)}<i class="car" style="margin-left:6px"></i></div><div class="it row">${ic("fillet", 11)}${T("Fillet", 18)}<i class="car" style="margin-left:5px"></i></div><div class="it row">${ic("array", 11)}${T("Array", 19)}<i class="car" style="margin-left:4px"></i></div>`)}
        ${this.col(1, 14, ["erase", "explode", "offset"].map((n) => html`<div class="it row">${ic(n)}</div>`))}`)}
      ${this.panel(190, T("Layers", 22), html`
        <div class="lp" style="width:42px">${ic("layerprops", 25)}<span style="height:1px"></span>${T("Layer", 20)}${T("Properties", 37)}</div>
        <div><div class="combo row">${ic("bulb", 9)}${ic("sun", 10)}${ic("lock", 11)}${ic("white", 9)}<span>0</span><span style="flex:1"></span><i class="car" style="transform:scale(1.400)"></i></div>
          <div style="height:1px"></div>
          <div class="licons row">${["lay1", "lay2", "lay3", "lay4", "lay5"].map((n) => ic(n, 12))}${T("Make Current", 50)}</div>
          <div class="licons row">${["lay6", "lay7", "lay8", "lay9", "lay10"].map((n) => ic(n, 12))}${T("Match Layer", 46)}</div></div>`)}
      ${this.panel(55, T("Clipboard", 36), html`
        <div class="lp" style="width:36px">${ic("paste", 24)}<span style="height:1px"></span>${T("Paste", 20)}${car}</div>
        ${this.col(3, 14, ["cut", "copy2", "paste2"].map((n) => html`<div class="it row">${ic(n, 12)}</div>`))}`, false)}`;
  }
}

/* ---------- side tabs ---------- */
@customElement("side-tabs")
class SideTabs extends LitElement {
  @property({ attribute: false }) items: [string, number][] = [];
  @property({ type: Number }) active = 0;
  static styles = [shared, css`
    :host { display: block; width: 13px; padding-top: 16.500px; font-size: 9px; }
    .t { height: 84.500px; display: flex; align-items: center; justify-content: center; background: #4b4b4b; border: 1px solid #383838; color: #a0a0a0; }
    .t.on { background: #5a5a5a; border-color: #5a5a5a; border-top-color: #444; color: #e4e4e4; }
    .v { writing-mode: vertical-rl; transform: rotate(180deg); line-height: 11px; }
  `];
  render() { return this.items.map(([t, w], i) => html`<div class=${classMap({ t: true, on: i === this.active })}><span class="v">${T(t, w)}</span></div>`); }
}

/* ---------- properties palette ---------- */
type Row = [string, number, string?, number?, boolean?];
const SECTIONS: [string, number, Row[]][] = [
  ["General", 31, [["Color", 20], ["Layer", 20], ["Linetype", 32], ["Linetype scale", 52], ["Lineweight", 41], ["Transparency", 49], ["Thickness", 36]]],
  ["3D Visualization", 62, [["Material", 30]]],
  ["Plot style", 35, [["Plot style", 34, "ByColor", 29], ["Plot style table", 54, "None", 20, true], ["Plot table attached to", 79, "Model", 24], ["Plot table type", 53, "Not available", 48]]],
  ["View", 20, [["Center X", 31, "-11381.285", 44], ["Center Y", 31, "6129.570", 36], ["Center Z", 31, "0.000", 21], ["Height", 26, "212.077", 31], ["Width", 22, "268.073", 31]]],
  ["Misc", 18, [["Annotation scale", 63, "1:1000", 26, true], ["UCS icon On", 46, "Yes", 13, true], ["UCS icon at origin", 66, "No", 11, true], ["UCS per viewport", 63, "Yes", 13, true], ["UCS Name", 39], ["Visual Style", 41, "3dWireframe", 48, true]]],
];
@customElement("properties-palette")
class PropertiesPalette extends LitElement {
  static styles = [shared, css`
    :host { display: flex; width: 308px; background: #5a5a5a; color: #dcdcdc; font-size: 9px; }
    .main { width: 292px; padding-left: 12px; }
    h2 { margin: 0; font: inherit; height: 13px; line-height: 13px; }
    .top { height: 14px; margin: 11px 8px 3.500px 0; justify-content: flex-end; gap: 8px; }
    .sel { width: 236px; height: 14px; padding-left: 2px; margin-right: auto; background: #505050; border: 1px solid #6e6e6e; }
    .hd { width: 273px; height: 14px; padding: 0 5px 0 4px; justify-content: space-between; background: #474747; border: 1px solid #3d3d3d; font-weight: bold; color: #fff; }
    .sec { padding-bottom: 1.100px; }
    .rows { padding-top: 1.200px; }
    .r { display: grid; grid-template-columns: 139.500px 1fr; height: 13.320px; align-items: center; padding-left: 16.500px; color: #dedede; line-height: 13px; }
    .val { color: #a2a2a2; } .val.lit { color: #e4e4e4; }
  `];
  render() {
    return html`<div class="main"><h2>${T("PROPERTIES", 45)}</h2>
      <div class="top row"><div class="sel row">${T("No selection", 46)}</div>${ic("node", 10)}${ic("nodeP", 12)}</div>
      ${SECTIONS.map(([h, hw, rows]) => html`<div class="sec"><div class="hd row">${T(h, hw)}<span>–</span></div><div class="rows">
        ${rows.map(([k, w, v, vw, lit]) => html`<div class="r">${T(k, w)}<span class=${classMap({ val: true, lit: !!lit })}>${v ? T(v, vw!) : ""}</span></div>`)}</div></div>`)}
      </div><side-tabs .items=${[["Design", 25], ["Display", 28], ["Extended Data", 54], ["Object Class", 45]]} .active=${0}></side-tabs>`;
  }
}

/* ---------- toolspace ---------- */
const TREE: [string, number][] = [["General", 28], ["Point", 20], ["Surface", 27], ["Parcel", 22], ["Grading", 29], ["Alignment", 39], ["Profile", 24], ["Profile View", 43], ["Superelevation View", 75], ["Cant View", 37], ["Sample Line", 45], ["Section", 27], ["Section View", 47], ["Mass Haul Line", 56], ["Mass Haul View", 58], ["Catchment", 41], ["Pipe Network", 50], ["Pipe", 16], ["Structure", 34], ["Pressure Network", 65], ["Pressure Pipe", 49], ["Fitting", 24], ["Appurtenance", 53], ["Corridor", 31], ["Intersection", 43], ["Assembly", 36], ["Subassembly", 49], ["Quantity Takeoff", 62], ["Survey", 25], ["View Frame Group", 68], ["View Frame", 43], ["Match Line", 41]];
@customElement("tool-space")
class ToolSpace extends LitElement {
  static styles = [shared, css`
    :host { display: flex; width: 273px; background: #5a5a5a; font-size: 9px; color: #e2e2e2; }
    .main { width: 257px; display: flex; flex-direction: column; }
    .h { height: 14px; padding-left: 11px; background: #545454; }
    .tb { height: 21px; justify-content: flex-end; gap: 9px; padding-right: 4px; background: #505050; }
    .dd { height: 14px; background: #dfdfdf; color: #222; padding: 0 3px 0 2px; justify-content: space-between; margin: 1px 0 2px 1px; width: 256px; }
    .tree { height: 460px; margin-left: 1px; width: 256px; background: #fff; color: #1e1e1e; overflow: hidden; display: flex; }
    .list { flex: 1; padding-top: 1.500px; overflow: hidden; }
    .n { height: 14.030px; line-height: 14px; }
    .root { padding-left: 6px; gap: 5px; font-weight: bold; }
    .root fit-text { margin-left: -1px; }
    .kid { padding-left: 20px; }
    .kid fit-text { margin-left: 4.500px; }
    .dot { width: 2px; height: 1px; margin: 0 1px; background: #999; }
    .ex { width: 7px; height: 7px; flex: none; }
    .sb { width: 12px; display: flex; flex-direction: column; background: #ececec; }
    .arr { height: 12px; display: grid; place-items: center; }
    .th { height: 409px; background: #c6c6c6; margin: 0 1px; }
    .out { height: 65px; margin-top: 6px; border: 1px solid #7c7c7c; background: #555; width: 257px; }
  `];
  ex(plus: boolean) { return html`<svg class="ex" viewBox="0 0 7 7"><path d="M.5.5h6v6h-6zM2 3.500h3${plus ? "M3.500 2v3" : ""}" fill="#f2f2f2" stroke="#888" stroke-width=".8"/></svg>`; }
  render() {
    return html`<div class="main"><div class="h row">${T("TOOLSPACE", 45)}</div>
      <div class="tb row"><svg width="12" height="11"><path d="M0 0h5v6H0zM5 6h6v5H5z" fill="#e6e6e6"/><path d="M7 8h3M1 3h3" stroke="#555"/></svg>
        <svg width="11" height="10"><path d="M0 0h11v9H0z" fill="#e6e6e6"/><path d="M7 8h4" stroke="#999"/></svg>
        <svg width="11" height="11"><path d="M0 0h11v11H0z" fill="#e6e6e6"/><path d="M3.500 4q0-2 2-2t2 2q0 1-2 2v1.500" stroke="#222" stroke-width="1.300" fill="none"/><path d="M5 8.500h1.300v1.300H5z" fill="#222"/></svg></div>
      <div class="dd row">${T("Active Drawing Settings View", 97)}<svg width="6" height="4"><path d="M.5.5L3 3 5.500.5" stroke="#555" fill="none"/></svg></div>
      <div class="tree"><div class="list"><div class="n root row">${this.ex(false)}${ic("doc", 12)}${T("Drawing3", 38)}</div>
        ${TREE.map(([t, w]) => html`<div class="n kid row">${this.ex(true)}<span class="dot"></span>${ic(t, 12.500)}${T(t, w)}</div>`)}</div>
        <div class="sb"><div class="arr"><svg width="6" height="4"><path d="M.5 3.500L3 1l2.500 2.500" stroke="#333" fill="none" stroke-width="1.200"/></svg></div><div class="th"></div><span style="flex:1"></span><div class="arr"><svg width="6" height="4"><path d="M.5.5L3 3 5.500.5" stroke="#333" fill="none" stroke-width="1.200"/></svg></div></div></div>
      <div class="out"></div></div>
      <side-tabs .items=${[["Prospector", 39], ["Settings", 30], ["Survey", 25], ["Toolbox", 31]]} .active=${1}></side-tabs>`;
  }
}

/* ---------- drawing viewport ---------- */
let seed = 7;
const rnd = () => ((seed = (seed * 16807) % 2147483647) / 2147483647);
const dots = (cx: number, cy: number, rx: number, ry: number, n: number, s: number, ang: number) => {
  let d = "";
  for (let i = 0; i < n; i++) {
    const a = rnd() * 6.283, r = Math.pow(rnd(), 0.6), w = s * (0.5 + rnd());
    const u = Math.cos(a) * r * rx, v = Math.sin(a) * r * ry;
    const x = cx + u * Math.cos(ang) - v * Math.sin(ang), y = cy + u * Math.sin(ang) + v * Math.cos(ang);
    d += `M${x.toFixed(1)} ${y.toFixed(1)}h${w.toFixed(1)}v${w.toFixed(1)}h-${w.toFixed(1)}z`;
  }
  return d;
};
const scatter = (cx: number, cy: number, rx: number, ry: number, n: number, color: string, s = 4, ang = 0) =>
  svg`<path d=${dots(cx, cy, rx, ry, n, s, ang)} fill=${color}/>`;
/* points gathered in small clumps spread over an ellipse */
const clumps = (cx: number, cy: number, rx: number, ry: number, n: number, color: string, s: number, ang: number) => {
  let d = "";
  const k = Math.max(3, Math.round(n / 9));
  for (let i = 0; i < k; i++) {
    const a = rnd() * 6.283, r = Math.sqrt(rnd());
    const u = Math.cos(a) * r * rx, v = Math.sin(a) * r * ry, q = 4 + rnd() * 9;
    d += dots(cx + u * Math.cos(ang) - v * Math.sin(ang), cy + u * Math.sin(ang) + v * Math.cos(ang), q, q, 9, s, 0);
  }
  return svg`<path d=${d} fill=${color}/>`;
};
const tree = (cx: number, cy: number, rx: number, ry: number, n: number, ang = 0, light = "#9dacd0", k = 0.6) => svg`
  ${clumps(cx, cy, rx * 1.150, ry * 1.150, n * 1.400, "#0e151e", 6, ang)}${clumps(cx, cy, rx, ry, n * 0.9, "#2f4058", 5, ang)}${clumps(cx, cy, rx * 0.9, ry * 0.9, n * k * 0.7, "#6f80a2", 5, ang)}${clumps(cx, cy, rx * 0.85, ry * 0.85, n * k, light, 5, ang)}`;
@customElement("drawing-viewport")
class DrawingViewport extends LitElement {
  static styles = css`:host { display: block; width: 743px; height: 586px; background: linear-gradient(#202a35, #1f2a33 50%, #1f2a34); } svg { display: block; }`;
  render() {
    return html`<svg width="743" height="586" viewBox="583 124 743 586" font-family="Open Sans">
      <defs>
        <linearGradient id="f" x1="0" y1="0" x2=".2" y2="1"><stop offset="0" stop-color="#183638"/><stop offset=".28" stop-color="#153b2f"/><stop offset=".5" stop-color="#254031"/><stop offset="1" stop-color="#2a4936"/></linearGradient>
        <filter id="rough" x="-5%" y="-5%" width="110%" height="110%"><feTurbulence type="fractalNoise" baseFrequency=".12" numOctaves="3" result="n"/><feDisplacementMap in="SourceGraphic" in2="n" scale="10" xChannelSelector="R" yChannelSelector="G"/><feGaussianBlur stdDeviation=".5"/></filter>
      </defs>
      <g transform="translate(690 250) scale(.33333)">
        <g filter="url(#rough)">
          <path d="M640 270L860 235 980 190 1100 190 1168 212 1200 290 1235 360 1252 470 1250 600 1235 680 1205 750 1120 850 1015 935 975 850 920 750 880 640 830 600z" fill="url(#f)"/>
          <path d="M350 400L420 340 520 300 640 275 780 270 870 300 890 420 885 630 740 655 690 600 480 560 350 460z" fill="#1b362b"/>
          <path d="M500 330L640 290 740 340 820 420 830 560 760 560 780 460 700 360 590 380 520 490 480 440z" fill="#21402a"/>
          <path d="M800 300l80-60 20 260 30 130-40 10-20-220z" fill="#263a3a"/>
          <path d="M800 350l60-40 30 150-30 10z" fill="#2a3037"/>
          <path d="M900 260l30 210" stroke="#2f4c46" stroke-width="10"/><path d="M870 255l30 190" stroke="#233938" stroke-width="12"/>
          <path d="M235 520L380 462 470 535 560 515 610 560 700 600 745 655 690 690 560 700 440 750 375 745 300 770 272 690 250 600z" fill="#444d62"/>
          <path d="M290 500L380 462 470 535 440 560 330 580z" fill="#363b48"/>
          <path d="M380 690L600 650 720 620 745 655 690 690 560 700 440 750 380 750z" fill="#333a45"/>
          <path d="M600 378L660 365 750 410 765 480 712 572 655 540 600 510 525 500 565 440z" fill="#50525b"/>
          <path d="M605 395L660 380 735 420 745 480 700 560 655 525 600 505 570 470z" fill="#686261"/>
          <path d="M485 540L600 512 650 545 700 600 600 650 520 660z" fill="#57555a"/>
          <path d="M450 740L560 700 640 705 675 800 695 895 620 920 520 935 450 870z" fill="#18352b"/>
          <path d="M320 790L380 752 440 760 445 870 380 890 320 860z" fill="#16342a"/>
          <path d="M210 780l60-5 40 30 20 50-60-10z" fill="#1f3e39"/>
          <path d="M640 705L665 790 700 900 510 970" stroke="#3a3b43" stroke-width="18" fill="none"/>
          <path d="M150 540q30-50 75-65l-30 35-45 55zM60 485l40-20 60-25-40 45-60 5zM112 570l25 15 15 120-18-10z" fill="#1c4a43"/>
          <path d="M500 980l200-50 30 80-120 50z" fill="#152f2c" opacity=".4"/>
        </g>
        ${scatter(430, 420, 100, 90, 380, "#275036", 4)}${scatter(560, 820, 110, 100, 600, "#264b38", 4)}${scatter(560, 850, 80, 60, 130, "#4a6c64", 3)}${scatter(380, 810, 60, 60, 240, "#234737", 4)}${scatter(770, 600, 80, 50, 200, "#264c38", 4)}
        ${scatter(480, 330, 150, 50, 350, "#142822", 5)}${scatter(780, 250, 100, 60, 240, "#162c29", 6)}${scatter(800, 400, 60, 180, 160, "#183027", 5)}
        ${scatter(590, 590, 80, 60, 360, "#76706b", 3)}${scatter(650, 480, 90, 90, 160, "#787070", 3)}${scatter(460, 620, 90, 90, 300, "#2b344b", 3)}${scatter(430, 630, 110, 90, 160, "#66748e", 3)}
        <path d="M585 385l-25 55-35 60M600 378l60-15 50 18 45 40 10 60-20 40" stroke="#171d24" stroke-width="7" stroke-dasharray="22 12" fill="none"/>
        <path d="M560 515l45-5 45 30 15 35 35 20" stroke="#3a4655" stroke-width="7" fill="none"/><path d="M528 480l32 30M668 568l36 26" stroke="#858ea2" stroke-width="18" stroke-dasharray="4 2" opacity=".6"/>
        <path d="M480 545L466 450 485 370 520 320 640 290 720 320 800 370 830 430 842 520 842 625M440 850L445 750 640 705" stroke="#4f6a86" stroke-width="4" stroke-dasharray="9 4" fill="none" opacity=".7"/>
        <path d="M640 290l60 15 50 40 50-5" stroke="#415b72" stroke-width="5" fill="none"/>
        <path d="M745 670l125-28 20 50" stroke="#4a4b55" stroke-width="9" fill="none"/><path d="M770 663l90-18M655 720l40 160" stroke="#858a97" stroke-width="4" stroke-dasharray="5 14"/>
        <path d="M700 690l10 45M750 680l10 40" stroke="#34465c" stroke-width="5"/>
        <path d="M1090 562l32 6 0 30-30-5zM1092 605l28 8-2 26-28-4zM1090 645l30 8-4 24-26-2zM1092 680l28 8-12 20-14-4z" fill="#202f48"/><path d="M1030 580l65 40M1110 705l90 48" stroke="#14222a" stroke-width="4"/>
        <path d="M1005 702l17 52" stroke="#8b99a5" stroke-width="7" stroke-dasharray="8 7"/><path d="M475 545h9v18h-9z" fill="#c54660"/>
        ${tree(765, 170, 40, 38, 130, 0, "#465a4c", 0.4)}${tree(718, 118, 44, 34, 170, 0.2, "#c3ccf0", 1)}
        ${tree(885, 150, 84, 84, 620, 0, "#9fafd2", 0.32)}${tree(1010, 135, 30, 18, 60)}${scatter(1080, 125, 60, 16, 60, "#22383f", 6)}${scatter(940, 68, 65, 12, 40, "#0c1117", 8)}
        ${tree(430, 260, 68, 40, 260, -0.1, "#a5b3d8", 0.55)}${tree(570, 222, 85, 24, 220, -0.2, "#a5b3d8", 0.5)}${tree(635, 235, 34, 16, 80, -0.2, "#bcc8ee", 0.9)}${scatter(430, 195, 80, 14, 90, "#0c1117", 8, -0.3)}${scatter(240, 275, 35, 12, 30, "#0c1117", 7)}
        ${tree(320, 240, 22, 22, 60, 0, "#8493b4", 0.5)}${tree(305, 310, 36, 30, 140, 0, "#b2bfe2", 0.8)}${tree(262, 345, 30, 26, 100, 0, "#8f9dc0", 0.7)}${scatter(340, 420, 30, 90, 160, "#12211f", 7)}${tree(295, 440, 34, 62, 240, 0.1, "#a0afd4", 0.7)}
        ${tree(140, 368, 42, 22, 90, 0, "#8e9dbe", 0.4)}${tree(122, 415, 20, 28, 50, 0, "#6a94ac", 0.4)}${scatter(135, 630, 20, 40, 90, "#76806f", 5)}${scatter(120, 580, 15, 30, 40, "#2a5e51", 7)}${scatter(250, 430, 26, 40, 60, "#0d141a", 7)}
        ${tree(325, 900, 80, 26, 190, 0.3, "#6b8ba4", 0.5)}${tree(420, 935, 65, 28, 170, 0, "#7f98b2", 0.5)}${scatter(185, 885, 38, 26, 80, "#6a6c5b", 5)}${scatter(250, 937, 35, 7, 30, "#98a5b3", 6)}
        ${scatter(220, 720, 14, 14, 18, "#77707c", 4)}${scatter(300, 680, 24, 40, 40, "#6a5c6c", 4)}${scatter(180, 600, 70, 70, 22, "#6a5560", 4)}${scatter(650, 1000, 110, 60, 60, "#1a3a36", 6)}
        ${scatter(600, 600, 600, 480, 30, "#334350", 3)}${scatter(70, 640, 45, 50, 14, "#24524b", 6)}${scatter(160, 840, 12, 40, 14, "#446d72", 5)}
      </g>
      <text x="586" y="136" font-size="9" fill="#dfe3e6" textLength="84">[−][Top][3dWireframe]</text>
      <path d="M1283 136h6M1297.500 131.500h4v4h-4zM1299 131v-1.500h4v4h-1M1312 131l4.500 4.500M1316.500 131l-4.500 4.500" stroke="#e6e6e6" stroke-width="1.500" fill="none"/>
      <circle cx="1267" cy="198" r="38" stroke="#414c56" stroke-width="9" fill="none"/>
      <path d="M1249 179h36v36h-36z" fill="#b3b6b8" stroke="#8e9396"/><path d="M1258 188h19v19h-19z" fill="#a9acae"/>
      <text x="1259.500" y="201" font-size="8.500" font-weight="bold" fill="#454b50" textLength="16">TOP</text>
      <g font-family="Liberation Sans" font-weight="bold" font-size="14.500" fill="#aeb3b6" text-anchor="middle"><text x="1267" y="163">N</text><text x="1267" y="242">S</text><text x="1228" y="203">W</text><text x="1307" y="203">E</text></g>
      <rect x="1251" y="259" width="33" height="11.500" rx="2.500" fill="#8b969c" stroke="#a4adb2"/><text x="1254" y="267" font-size="7.500" fill="#414d54" textLength="16">WCS</text>
      <rect x="1300" y="289" width="23" height="148" rx="2" fill="#58636c"/><g stroke="#4d5861" fill="none" stroke-width="1.200"><circle cx="1311" cy="308" r="6"/><circle cx="1311" cy="308" r="3"/><path d="M1305 337q2-7 4-2 2-7 4-1 4-4 4 2l-3 6h-6zM1304 349l10 12M1314 349l-10 12M1311 380v18M1303 389h16M1307 383h8v12h-8zM1304 408h4v4h-4zM1311 408h5v4h-5zM1305 416h12v9h-12zM1309 418l4 2.500-4 2.500z"/></g>
      <path d="M616.500 641h3.500v33h-3.500z" fill="#4fae4f"/><path d="M618 672.500h35v3.500h-35z" fill="#b35454"/><circle cx="618" cy="674" r="2.500" fill="#3d86e0"/>
      <path d="M617 631l3 4 3-4M620 635v4" stroke="#3c7e43" fill="none"/><path d="M650 663l8 9M658 663l-8 9" stroke="#9b3c3c"/><path d="M619 664h4l-4 5" stroke="#2f5ec0" fill="none"/>
    </svg>`;
  }
}

@customElement("side-toolbar")
class SideToolbar extends LitElement {
  static styles = css`:host { display: flex; width: 22px; background: #575757; padding: 0 1px 0 3px; } .s { width: 17px; display: flex; flex-direction: column; align-items: center; gap: 4.350px; padding-top: 1px; background: #4a4a4a; border: 1px solid #3f3f3f; border-width: 0 1px; height: 440px; } .ic { display: block; flex: none; } hr { width: 13px; height: 2px; margin: 0; border: 0; background: #aaa; flex: none; } .grip { width: 9px; height: 1px; border-top: 2px dotted #2c2c2c; margin: .5px 0; }`;
  render() {
    const l = "flag flag2 flag3 flag4 page globe globe2 nodeS nodeA nodeS nodeS sel red - nodeS - red redDot redDot - dim dim2 dim3 dim2 ball dotnode curve : nodeS page nodeS".split(" ");
    return html`<div class="s"><div class="grip"></div>${l.map((n) => (n === "-" ? html`<hr />` : n === ":" ? html`<div class="grip"></div>` : ic(n, 11)))}</div>`;
  }
}

/* ---------- open drop-down ---------- */
@customElement("surface-menu")
class SurfaceMenu extends LitElement {
  static styles = [shared, css`
    :host { display: block; width: 153px; height: 233px; padding-top: .6px; background: #5b5b5b; border: 1px solid #2e2e2e; font-size: 9px; color: #e0e0e0; }
    .m { height: 28px; padding-left: 3px; gap: 4px; position: relative; }
    .on { background: linear-gradient(#7c7c7c, #606060); box-shadow: inset 0 0 0 1px #3a3a3a; height: 26px; margin: 1px 1px; padding-left: 2px; }
    .m b { position: absolute; left: 14px; top: 2px; }
    hr { margin: .5px 0 1.500px; border: 0; height: 1px; background: #8d8d8d; }
  `];
  render() {
    const m = (i: string, t: string, w: number, st = false, on = false) => html`<div class=${classMap({ m: true, row: true, on })}>${ic(i, 20)}${st ? html`<b><svg width="10" height="9" viewBox="8.500 0 8 7.200">${spark}</svg></b>` : ""}${T(t, w)}</div>`;
    return html`${m("mSurface", "Create Surface", 54, true)}<hr />${m("mDem", "Create Surface from DEM", 94, true)}${m("mCloud", "Create Surface from Point Cloud", 120, true, true)}${m("mTin", "Create Surface from TIN", 90)}${m("mGis", "Create Surface from GIS Data", 107)}<hr />${m("mGrade", "Create Surface from Grading", 106)}${m("mCorr", "Create Surface from Corridor", 107)}${m("mCrop", "Create Cropped Surface", 88)}`;
  }
}

/* ---------- status bar ---------- */
@customElement("status-bar")
class StatusBar extends LitElement {
  static styles = css`:host { display: flex; justify-content: flex-end; height: 19px; background: linear-gradient(#2a2a2a, #181818); font-size: 9px; } svg { display: block; background: #303030; }`;
  render() {
    const c = (x: number) => svg`<path d="M${x - 2} 8h5l-2.500 3z" fill="#aaa"/>`;
    return html`<svg width="570" height="19" viewBox="778 0 570 19" font-family="Open Sans" font-size="9" fill="#a9a9a9">
      <path d="M778.500 0v19M905 2v15M941 2v15M986 2v15" stroke="#555"/>
      <text x="795" y="13" textLength="106">-11448.872, 6160.065, 0.000</text><text x="909" y="13" textLength="29">MODEL</text>
      <g stroke="#888" fill="none"><path d="M947 4v12M950.500 4v12M954 4v12M944 7h13M944 10.500h13M944 14h13"/><path d="M963 6h10M963 10h10M963 14h10" stroke-dasharray="2 2" stroke-width="2"/><path d="M992 4v11h10"/></g>
      <path d="M1006 1h15v16h-15zM1061 1h15v16h-15zM1079 1h15v16h-15zM1108 1h14v16h-14z" fill="#234b78"/>
      <g stroke="#8fb4dc" fill="none" stroke-width="1.200"><circle cx="1013" cy="9" r="4.500"/><path d="M1013 9h6M1013 9l5-6M1064 14h10M1065 13l8-9M1082 5h8v9h-8zM1111 15l4-11 4 11M1112 11h6M1118 4l2 3"/></g>
      <path d="M1036 4l8 11M1041 2v14M1127 15l4-11 5 10M1129 11l8-5" stroke="#888" fill="none"/>
      ${[981, 1027, 1054, 1100, 1219].map(c)}<text x="1166" y="13" textLength="18">1000</text><circle cx="1208" cy="9.500" r="3.500" fill="none" stroke="#999" stroke-width="2"/>
      <path d="M1249 15l4-7 4 7z" stroke="#777" fill="none"/><path d="M1267 6l5-3 5 3-5 3zM1267 10l5 3 5-3" stroke="#3f7cc0" fill="none" stroke-width="1.500"/><text x="1286" y="13" textLength="21">3.500</text><path d="M1334 5h10M1334 9h10M1334 13h10" stroke="#aaa" stroke-width="1.500"/>
    </svg>`;
  }
}

/* ---------- video player chrome ---------- */
@customElement("player-controls")
class PlayerControls extends LitElement {
  static styles = [shared, css`
    :host { display: flex; flex-direction: column; height: 32px; font-family: Roboto, sans-serif; }
    .track { display: flex; height: 3px; background: rgba(255, 255, 255, .2); }
    .played { width: 201px; background: #f00; } .loaded { width: 140px; background: rgba(255, 255, 255, .4); }
    .c { height: 29px; padding: 13px 0 0 15px; align-items: flex-start; color: #e2e2e2; overflow: hidden; }
    .time { font-size: 12.500px; line-height: 14px; margin: 1px 0 0 19px; }
    svg { display: block; overflow: visible; } .right { margin-left: auto; }
    .next { margin-top: 2px; } .vol { margin-left: 27px; }
  `];
  render() {
    return html`<div class="track"><div class="played"></div><div class="loaded"></div></div>
      <div class="c row"><svg class="next" width="15" height="14"><path d="M0 0l10 7-10 7zM12 0h3v14h-3z" fill="#eee"/></svg>
        <svg class="vol" width="16" height="16"><path d="M0 5h4l5-5v16l-5-5H0zM11 4q3 4 0 8z" fill="#eee"/><path d="M10.500 1q5 2 5 7t-5 7" stroke="#eee" stroke-width="1.700" fill="none"/></svg>
        <span class="time">${T("1:11 / 7:00", 56)}</span>
        <svg class="right" width="217" height="17" viewBox="1136 714 217 17">
          <rect x="1136" y="718" width="22" height="8" rx="4" fill="#8d8d8d"/><circle cx="1157" cy="722" r="8.500" fill="#eee"/><path d="M1154.500 718v8l6-4z" fill="#333"/>
          <rect x="1186" y="715" width="19" height="15" rx="2" fill="#eee"/><text x="1189" y="726" font-size="9.500" font-weight="900" fill="#222" textLength="13">CC</text>
          <svg x="1230" y="713" width="18" height="18" viewBox="0 0 16 16">${ICONS.gear}</svg>
          <rect x="1243.500" y="710" width="12.500" height="8" fill="#f00"/><text x="1245" y="716.500" font-size="6.500" font-weight="bold" fill="#fff" textLength="10">HD</text>
          <path d="M1273 715.500h19v15h-19z" fill="none" stroke="#eee" stroke-width="2"/><path d="M1281 721h8v6h-8z" fill="#eee"/>
          <path d="M1317 718h16v9h-16z" fill="none" stroke="#eee" stroke-width="2.500"/>
        </svg></div>`;
  }
}

@customElement("app-root")
class AppRoot extends LitElement {
  static styles = [shared, css`
    :host { display: block; position: relative; width: 1353px; height: 730px; overflow: hidden; background: #000; font-family: "Open Sans", "Noto Sans", sans-serif; line-height: 12px; }
    .app { width: 1346px; margin-left: 2px; padding-top: 2px; height: 729px; display: flex; flex-direction: column; }
    .docs { height: 17px; background: #393939; padding: 3px 0 0 10px; }
    .start { width: 240px; height: 14px; padding-left: 12px; font-size: 9px; color: #a5a5a5; background: linear-gradient(#565656, #484848); clip-path: polygon(7px 0, 100% 0, 100% 100%, 0 100%); }
    .strip { height: 4px; background: linear-gradient(#474747, #5c5c5c); }
    .work { display: flex; height: 586px; background: #5a5a5a; }
    .over { position: absolute; }
    .shade { left: 0; right: 0; top: 380px; height: 330px; background: linear-gradient(rgba(0,0,0,0), rgba(0,0,0,.03) 20%, rgba(0,0,0,.12) 50%, rgba(0,0,0,.24) 78%, rgba(0,0,0,.3)); }
    .cmd { left: 880px; top: 692px; } .mark { left: 720px; top: 610px; }
    .menu { left: 98px; top: 69px; } .ctl { left: 0; right: 0; bottom: 0; } .cur { left: 187px; top: 142px; }
  `];
  render() {
    return html`<div class="app"><title-bar></title-bar><ribbon-bar></ribbon-bar>
        <div class="docs"><div class="start row">${T("Start", 17)}</div></div><div class="strip"></div>
        <div class="work"><properties-palette></properties-palette><tool-space></tool-space><drawing-viewport></drawing-viewport><side-toolbar></side-toolbar></div>
        <status-bar></status-bar></div>
      <div class="over shade"></div>
      <svg class="over cmd" width="162" height="17"><path d="M0 0h27v17H0z" fill="#3c4145"/><path d="M6 5l-4 4 4 4M12 13l6-8" stroke="#aaa" fill="none"/><path d="M27 0h133v15H27z" fill="#858585"/><path d="M29.500 4.500h9v8h-9z" fill="#777" stroke="#222"/><text x="31" y="11" font-size="6" fill="#ddd">&gt;_</text>
        <text x="46" y="12" font-size="9" font-style="italic" fill="#333" textLength="74">Type a command</text></svg>
      <svg class="over mark" width="620" height="120" viewBox="720 610 620 120" font-family="Lato" font-weight="700" fill="#65686b" stroke="#65686b" stroke-width="1.600">
        <text x="727" y="707.500" font-size="97" textLength="186" lengthAdjust="spacingAndGlyphs">man</text><text x="999" y="707.500" font-size="97" textLength="335" lengthAdjust="spacingAndGlyphs">machine</text>
        <path d="M923 647h27v20q0 6 7 6.500 7-.5 7-6.500v-20h27v27h-20q-6 .5-6.500 6.500.5 6 6.500 6.500h20v26.500h-27v-20q0-6-7-6.500-7 .5-7 6.500v20h-27V687h20q6-.5 6.500-6.500-.5-6-6.500-6.500h-20z" fill="#c66f06" stroke="none"/></svg>
      <surface-menu class="over menu"></surface-menu>
      <svg class="over cur" width="9" height="14" viewBox="0 0 9 14"><path d="M.5.5v11l2.500-2.300 1.700 4 1.800-.8-1.700-3.800h3.500z" fill="#fff" stroke="#333" stroke-width=".6"/></svg>
      <player-controls class="over ctl"></player-controls>`;
  }
}
